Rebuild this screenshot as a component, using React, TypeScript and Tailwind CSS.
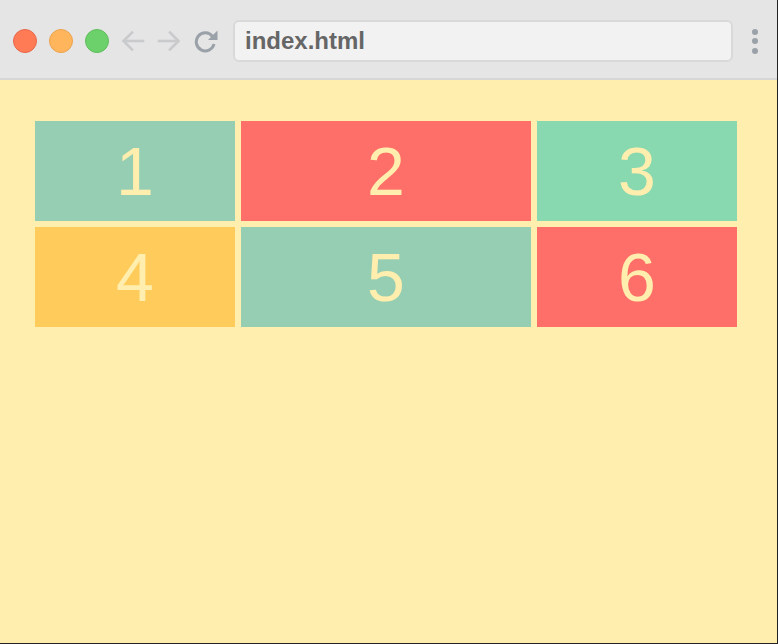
import React from 'react';

const cells = [
  { n: '1', bg: 'bg-[#96ceb4]' },
  { n: '2', bg: 'bg-[#ff6f69]' },
  { n: '3', bg: 'bg-[#88d8b0]' },
  { n: '4', bg: 'bg-[#ffcc5c]' },
  { n: '5', bg: 'bg-[#96ceb4]' },
  { n: '6', bg: 'bg-[#ff6f69]' },
];

function Arrow({ dir }: { dir: 'left' | 'right' }) {
  return (
    <svg width="24" height="22" viewBox="0 0 24 22" fill="none" stroke="#c8cacc" strokeWidth="2.6" strokeLinecap="square">
      {dir === 'left' ? (
        <>
          <path d="M3 11 H22" />
          <path d="M11 2.5 L2.5 11 L11 19.5" strokeLinejoin="miter" />
        </>
      ) : (
        <>
          <path d="M2 11 H21" />
          <path d="M13 2.5 L21.5 11 L13 19.5" strokeLinejoin="miter" />
        </>
      )}
    </svg>
  );
}

function Reload() {
  return (
    <svg width="26" height="24" viewBox="0 0 26 24" fill="none">
      <path d="M19.5 7.5 A9 9 0 1 0 21 15" stroke="#9aa1a8" strokeWidth="3" />
      <path d="M24.5 1.5 V11 H15 Z" fill="#9aa1a8" />
    </svg>
  );
}

export default function App() {
  return (
    <div className="w-[778px] h-[644px] flex flex-col bg-[#ffeead] border-r-[1.5px] border-b-[1.5px] border-[#222] font-['Liberation_Sans',Arial,sans-serif]">
      {/* Browser chrome */}
      <div className="h-[80px] shrink-0 bg-[#e5e5e5] border-b-2 border-[#d6d6d6] flex items-center pt-[4px] pl-[13px] pr-[19px]">
        <div className="flex items-center gap-[12px]">
          <span className="w-[24px] h-[24px] rounded-full bg-[#ff7b56] border border-[#e8684a]" />
          <span className="w-[24px] h-[24px] rounded-full bg-[#ffb55c] border border-[#eba34f]" />
          <span className="w-[24px] h-[24px] rounded-full bg-[#6dd16b] border border-[#5fbd5d]" />
        </div>
        <div className="flex items-center gap-[12px] ml-[12px]">
          <Arrow dir="left" />
          <Arrow dir="right" />
          <Reload />
        </div>
        <div className="ml-[14px] w-[500px] h-[42px] rounded-[6px] bg-[#f2f2f2] border-2 border-[#d9d9d9] flex items-center pl-[10px]">
          <span className="text-[24px] font-bold leading-none text-[#666]">index.html</span>
        </div>
        <div className="ml-auto flex flex-col items-center gap-[3.5px]">
          <span className="w-[6px] h-[6px] rounded-full bg-[#9aa1a8]" />
          <span className="w-[6px] h-[6px] rounded-full bg-[#9aa1a8]" />
          <span className="w-[6px] h-[6px] rounded-full bg-[#9aa1a8]" />
        </div>
      </div>

      {/* Page content */}
      <div className="pt-[41px] pl-[35px]">
        <div className="grid grid-cols-[200px_290px_200px] auto-rows-[100px] gap-[6px]">
          {cells.map((c) => (
            <div key={c.n} className={`${c.bg} flex items-center justify-center text-[68px] leading-none text-[#ffeead]`}>
              {c.n}
            </div>
          ))}
        </div>
      </div>
    </div>
  );
}
